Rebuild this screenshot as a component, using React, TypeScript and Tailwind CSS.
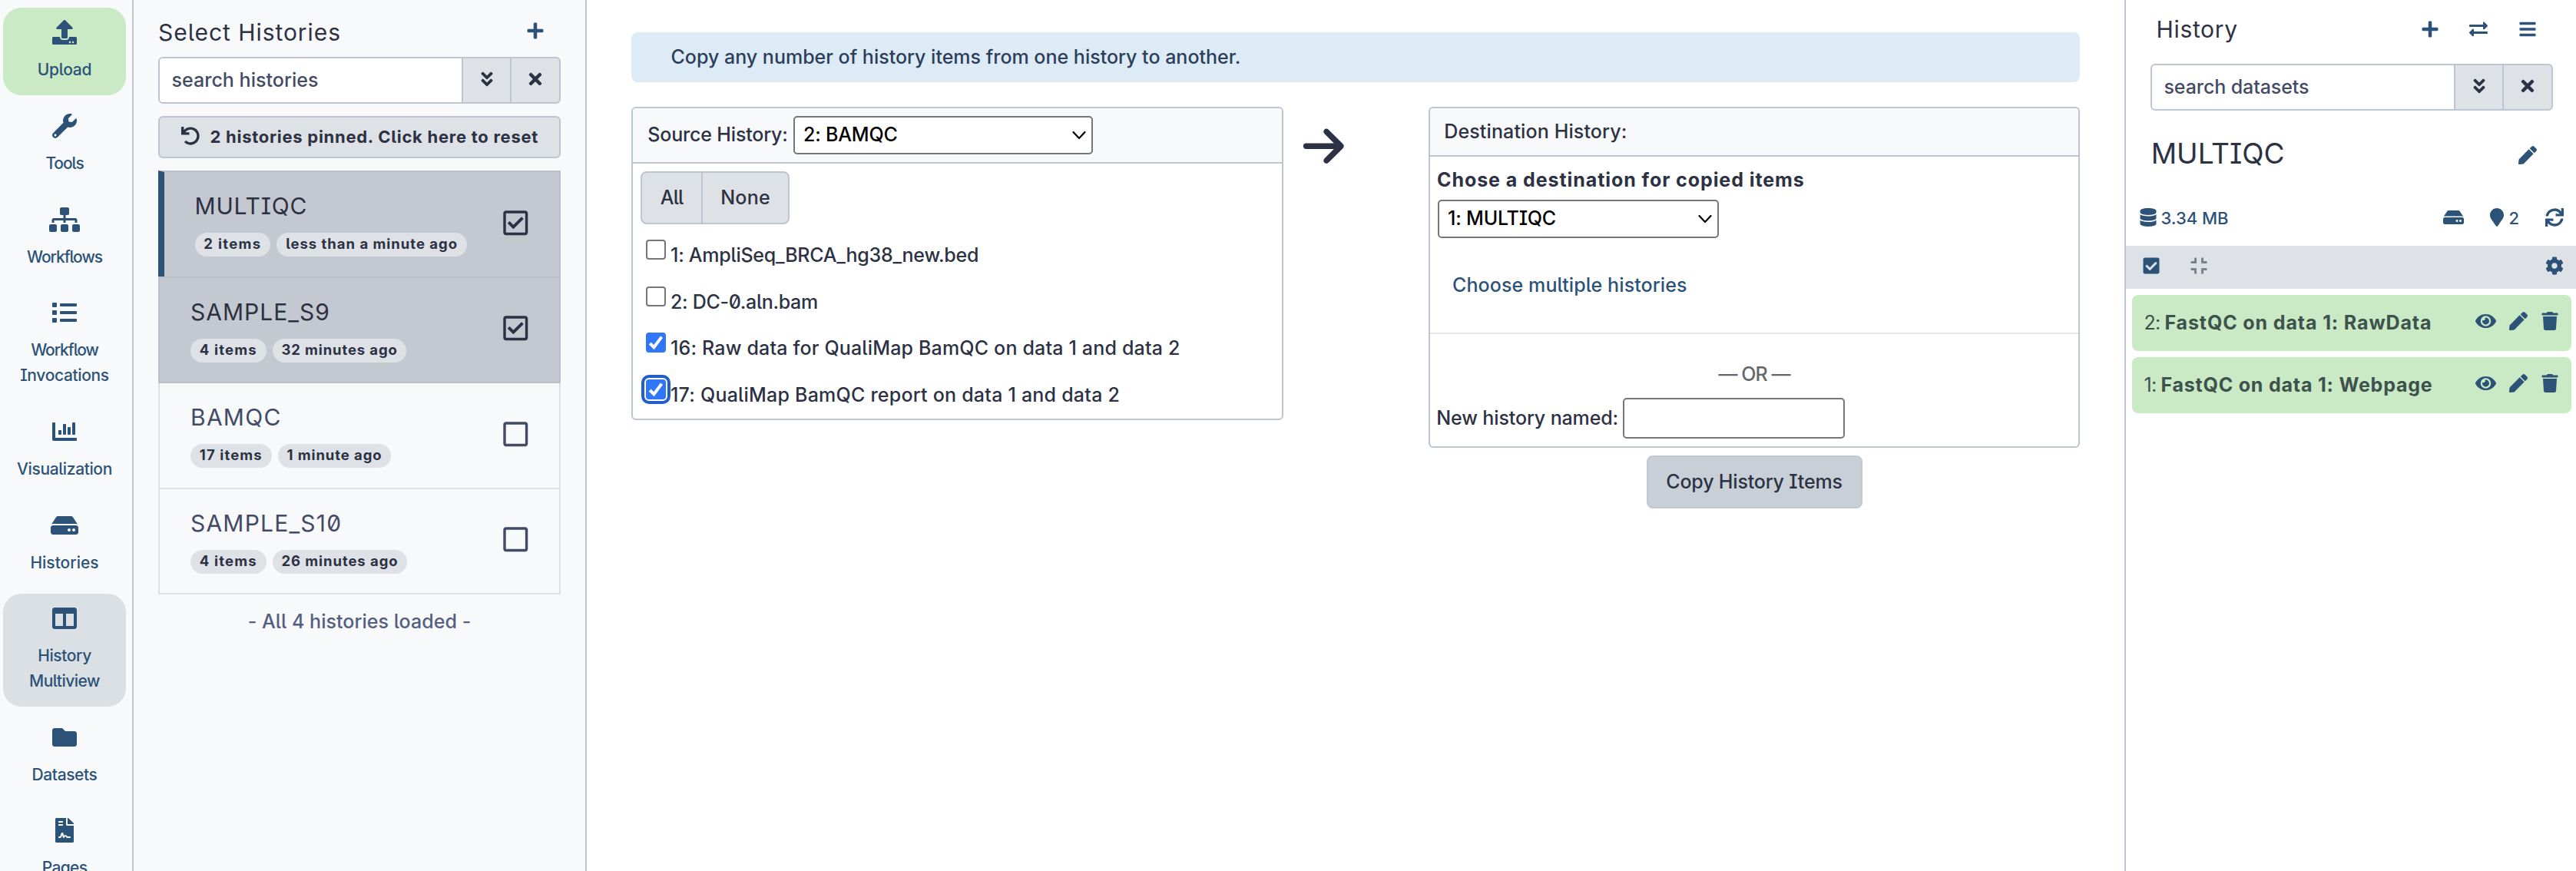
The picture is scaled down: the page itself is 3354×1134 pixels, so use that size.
import type { ReactNode } from "react";
import {
  FaUpload, FaWrench, FaSitemap, FaList, FaChartBar, FaHdd, FaColumns, FaFolder, FaFileContract, FaPlus,
  FaAngleDoubleDown, FaTimes, FaUndo, FaRegCheckSquare, FaRegSquare, FaExchangeAlt, FaBars, FaPen, FaDatabase,
  FaMapMarker, FaSync, FaCheckSquare, FaCompress, FaCog, FaEye, FaTrash,
} from "react-icons/fa";
import { FaArrowRight } from "react-icons/fa6";

function T({ t, c = "" }: { t: string; c?: string }) {
  return <span className={"whitespace-nowrap " + c}>{t}</span>;
}

const nav = [
  { Icon: FaUpload, size: "w-8 h-8", box: "bg-[#cae9c5]", lines: [["Upload", "tracking-[-0.01em]"]] },
  { Icon: FaWrench, size: "w-8 h-8", box: "", lines: [["Tools", "tracking-[-0.053em]"]] },
  { Icon: FaSitemap, size: "w-10 h-8", box: "", lines: [["Workflows", "tracking-[-0.051em]"]] },
  { Icon: FaList, size: "w-8 h-8", box: "", lines: [["Workflow", "tracking-[-0.051em]"], ["Invocations", "tracking-[-0.017em]"]] },
  { Icon: FaChartBar, size: "w-8 h-8", box: "", lines: [["Visualization", "tracking-[-0.018em]"]] },
  { Icon: FaHdd, size: "w-9 h-8", box: "", lines: [["Histories", ""]] },
  { Icon: FaColumns, size: "w-8 h-8", box: "bg-[#dbe0e4]", lines: [["History", "tracking-[-0.018em]"], ["Multiview", "tracking-[-0.024em]"]] },
  { Icon: FaFolder, size: "w-8 h-8", box: "", lines: [["Datasets", "tracking-[-0.02em]"]] },
  { Icon: FaFileContract, size: "w-8 h-8", box: "", lines: [["Pages", "tracking-[-0.032em]"]] },
];

function Sidebar() {
  return (
    <nav className="flex h-full w-[174px] shrink-0 flex-col gap-[7.8px] overflow-hidden border-r-2 border-[#bdc6d0] bg-[#f8f9fb] pt-[10px] pr-2 pl-1 text-[21px] leading-[32.6px] text-[#2c5277]">
      {nav.map(({ Icon, size, box, lines }, i) => (
        <div key={i} className={"flex shrink-0 flex-col items-center rounded-[24px] pt-4 pb-[16.4px] " + box}>
          <Icon className={"mb-[17px] shrink-0 " + size} />
          {lines.map(([t, c]) => <T key={t} t={t} c={c} />)}
        </div>
      ))}
    </nav>
  );
}

function Search({ children }: { children: ReactNode }) {
  return (
    <div className="flex h-[61px] w-[524px] rounded-md border-2 border-[#bdc6d0] bg-[#dee1e6] text-2xl text-[#2c3143]">
      <div className="flex flex-1 items-center rounded-l bg-white pl-[15.5px] text-[25px] text-[#434a66]">{children}</div>
      <div className="flex w-[63px] items-center justify-center border-l-2 border-[#bdc6d0] pb-[3px]"><FaAngleDoubleDown /></div>
      <div className="flex w-16 items-center justify-center border-l-2 border-[#bdc6d0] pb-[3px]"><FaTimes /></div>
    </div>
  );
}

function Row({ box, title, pills, on }: { box: string; title: ReactNode; pills: string[][]; on?: boolean }) {
  const Check = on ? FaRegCheckSquare : FaRegSquare;
  return (
    <div className={"flex items-center justify-between border-r-2 pr-[38px] " + box + (on ? " border-[#bac1cb] bg-[#c4c8d0] text-[#2c3143]" : " border-[#dee1e4] text-[#434a66]")}>
      <div className="flex h-full flex-col pt-6">
        <div className="flex h-10 items-center text-[30px] font-normal">{title}</div>
        <div className="mt-[15px] flex gap-2">
          {pills.map(([t, c]) => (
            <span key={t} className="flex h-[31px] items-center rounded-full bg-[#dee1e6] px-[11.8px] pb-[1.5px] text-[18.5px] font-bold text-[#2c3143]"><T t={t} c={c} /></span>
          ))}
        </div>
      </div>
      <Check className="mb-1 text-[36.57px]" />
    </div>
  );
}

function HistorySelector() {
  return (
    <section className="h-full w-[590px] shrink-0 border-r-2 border-[#bdc6d0] bg-[#f8f9fb] pl-8 text-[#2c3143]">
      <div className="w-[524px]">
        <div className="flex h-[74px] items-center justify-between pt-[11px] pr-[21.5px]">
          <T t="Select Histories" c="text-[30px] font-normal tracking-[0.032em]" />
          <FaPlus className="mb-[6px] text-2xl text-[#2c5277]" />
        </div>
        <Search><T t="search histories" c="tracking-[0.001em]" /></Search>
        <div className="mt-4 flex h-[55px] items-center gap-[13.5px] rounded-md border-2 border-[#bdc6d0] bg-[#dee1e6] pb-[1px] pl-7 text-[22px] font-bold">
          <FaUndo className="mb-[3px] text-2xl" />
          <T t="2 histories pinned. Click here to reset" c="tracking-[0.033em]" />
        </div>
        <div className="mt-4">
          <Row on box="h-[138px] border-t-2 border-l-8 pl-[39.5px] !border-l-[#2c5277]" title={<T t="MULTIQC" c="tracking-[0.028em]" />} pills={[["2 items", "tracking-[0.072em]"], ["less than a minute ago", "tracking-[0.053em]"]]} />
          <Row on box="h-[139px] border-y-2 border-l-2 pl-10" title={<T t="SAMPLE_S9" c="tracking-[0.034em]" />} pills={[["4 items", "tracking-[0.064em]"], ["32 minutes ago", "tracking-[0.047em]"]]} />
          <Row box="h-[138px] border-b-2 border-l-2 pl-10" title={<T t="BAMQC" c="tracking-[0.042em]" />} pills={[["17 items", "tracking-[0.061em]"], ["1 minute ago", "tracking-[0.05em]"]]} />
          <Row box="h-[137px] border-b-2 border-l-2 pl-10" title={<T t="SAMPLE_S10" c="tracking-[0.04em]" />} pills={[["4 items", "tracking-[0.064em]"], ["26 minutes ago", "tracking-[0.05em]"]]} />
        </div>
        <div className="mt-[17px] text-center text-[25px] leading-9 text-[#545e82]"><T t="- All 4 histories loaded -" c="tracking-[0.002em]" /></div>
      </div>
    </section>
  );
}

function Select({ w, children }: { w: string; children: ReactNode }) {
  return (
    <div className={"flex h-[50px] shrink-0 items-center justify-between rounded-[5px] border-2 border-[#767676] bg-white pr-[7px] pl-[11px] text-black " + w}>
      {children}
      <svg viewBox="0 0 18 12" className="h-3 w-[18px]" fill="none" stroke="currentColor" strokeWidth="2.2" strokeLinecap="round" strokeLinejoin="round"><path d="M1.5 2 9 10l7.5-8" /></svg>
    </div>
  );
}

function Check({ on, focus }: { on?: boolean; focus?: boolean }) {
  return (
    <span className={"mt-[9.6px] mr-[6px] flex size-[26px] shrink-0 items-center justify-center self-start rounded-[4px] " + (on ? "bg-[#2f76f8]" : "border-2 border-[#767676] bg-white") + (focus ? " outline-4 outline-offset-2 outline-[#245fc9]" : "")}>
      {on && <svg viewBox="0 0 26 26" className="size-[26px]" fill="none" stroke="white" strokeWidth="4"><path d="m5.2 14 5.2 5.2L20.5 5.6" /></svg>}
    </span>
  );
}

const items = [
  { t: "1: AmpliSeq_BRCA_hg38_new.bed", c: "tracking-[-0.01em]" },
  { t: "2: DC-0.aln.bam", c: "tracking-[-0.013em]" },
  { t: "16: Raw data for QualiMap BamQC on data 1 and data 2", c: "tracking-[0.007em]", on: true },
  { t: "17: QualiMap BamQC report on data 1 and data 2", c: "tracking-[0.009em]", on: true, focus: true },
];

function CopyView() {
  return (
    <main className="h-full flex-1 bg-white px-[58px] pt-[42px] text-[25px] text-[#2c3143]">
      <div className="flex h-[65px] items-center rounded-lg bg-[#ddebf6] pl-[51.5px] text-[#2c3e5a]">
        <T t="Copy any number of history items from one history to another." />
      </div>
      <div className="mt-8 flex items-start">
        <div className="h-[408px] w-[849px] shrink-0 overflow-hidden rounded-md border-2 border-[#bdc6d0]">
          <div className="flex h-[72px] items-center border-b-2 border-[#bdc6d0] bg-[#f8f9fb] pl-[19.3px]">
            <div className="flex w-[189.7px] shrink-0"><T t="Source History:" c="tracking-[-0.007em]" /></div>
            <Select w="w-[390px]"><T t="2: BAMQC" c="tracking-[-0.008em]" /></Select>
          </div>
          <div className="mt-[10px] ml-[10px] flex h-[69px] w-[194px] items-center rounded-lg border-2 border-[#bdc6d0] bg-[#dee1e6]">
            <div className="flex h-full w-[79px] items-center justify-center border-r-2 border-[#bdc6d0] pt-[1px]"><T t="All" c="tracking-[-0.035em]" /></div>
            <div className="flex h-full flex-1 items-center justify-center pt-[1px]"><T t="None" c="tracking-[0.009em]" /></div>
          </div>
          <div className="mt-[10.4px] pl-[17px]">
            {items.map(({ t, c, on, focus }) => (
              <div key={t} className="flex h-[60.6px] items-center"><Check on={on} focus={focus} /><T t={t} c={c} /></div>
            ))}
          </div>
        </div>
        <div className="flex w-[189px] shrink-0 pt-[21px] pl-[22px]"><FaArrowRight className="text-[60.5px]" /></div>
        <div className="w-[848px] shrink-0">
          <div className="overflow-hidden rounded-md border-2 border-[#bdc6d0] pb-[10px]">
            <div className="flex h-[63px] items-center border-b-2 border-[#bdc6d0] bg-[#f8f9fb] pl-[18.3px]"><T t="Destination History:" c="tracking-[0.005em]" /></div>
            <div className="mt-[11.6px] ml-[9px] leading-9 font-bold"><T t="Chose a destination for copied items" c="tracking-[0.037em]" /></div>
            <div className="mt-[8.4px] ml-[10px] flex"><Select w="w-[366px]"><T t="1: MULTIQC" c="tracking-[-0.008em]" /></Select></div>
            <div className="mt-[43px] ml-[29px] leading-9 text-[#2c5277]"><T t="Choose multiple histories" c="tracking-[0.004em]" /></div>
            <div className="mt-11 h-[2px] bg-[#e6e6e6]" />
            <div className="mt-[34px] text-center leading-9 text-[#666]"><T t="— OR —" c="tracking-[-0.038em]" /></div>
            <div className="mt-[13px] ml-[8.3px] flex h-[53px] items-center">
              <div className="flex w-[242.7px] shrink-0"><T t="New history named:" c="tracking-[-0.005em]" /></div>
              <div className="h-full w-[289px] rounded-[5px] border-2 border-[#767676] bg-white" />
            </div>
          </div>
          <div className="mx-auto mt-[10px] flex h-[69px] w-[281px] items-center justify-center rounded-lg border-2 border-[#c1c8d1] bg-[#c9cfd7] pt-[1px]"><T t="Copy History Items" c="tracking-[-0.007em]" /></div>
        </div>
      </div>
    </main>
  );
}

const datasets = [
  { n: "2:", t: "FastQC on data 1: RawData", c: "tracking-[0.035em]" },
  { n: "1:", t: "FastQC on data 1: Webpage", c: "tracking-[0.032em]" },
];

function HistoryPanel() {
  return (
    <aside className="h-full w-[588px] shrink-0 border-l-2 border-[#bdc3d3] bg-white text-2xl text-[#2c5277]">
      <div className="flex h-[83px] items-center justify-between pr-[31.7px] pb-[8px] pl-[39.5px]">
        <T t="History" c="mt-[3px] text-[30px] font-normal text-[#2c3143] tracking-[0.022em]" />
        <div className="flex">
          <div className="flex w-[63.5px] justify-center"><FaPlus /></div>
          <div className="flex w-[63.5px] justify-center"><FaExchangeAlt /></div>
          <div className="flex w-[63.5px] justify-center"><FaBars /></div>
        </div>
      </div>
      <div className="ml-8"><Search><T t="search datasets" c="tracking-[-0.004em]" /></Search></div>
      <div className="flex h-[111px] items-center justify-between pr-[51px] pl-[32.7px]">
        <T t="MULTIQC" c="text-[37px] font-normal text-[#2c3143]" />
        <FaPen className="mt-[5px]" />
      </div>
      <div className="flex h-[65px] items-center pr-4 pb-[9px] pl-[16.5px]">
        <FaDatabase />
        <T t="3.34 MB" c="mt-[3px] ml-[5px] text-[22px]" />
        <FaHdd className="ml-auto w-[27px]" />
        <FaMapMarker className="ml-[31px]" />
        <T t="2" c="mt-[3px] ml-[3px] text-[22px]" />
        <FaSync className="ml-[34px]" />
      </div>
      <div className="flex h-14 items-center bg-[#dee1e6] pr-4 pb-1 pl-[20.5px]">
        <FaCheckSquare />
        <FaCompress className="ml-[38.5px] text-[#7d8194]" />
        <FaCog className="ml-auto" />
      </div>
      <div className="flex flex-col gap-2 pt-2 pr-[6px] pl-2">
        {datasets.map((d) => (
          <div key={d.n} className="flex h-[73px] items-center rounded-lg bg-[#cae9c5] pr-[16.5px] pl-[15.5px]">
            <span className="flex gap-[6px] text-[25px] text-[#3d524c]"><T t={d.n} c="font-normal tracking-[-0.03em]" /><T t={d.t} c={"font-bold " + d.c} /></span>
            <FaEye className="mb-[5px] ml-auto w-[27px]" />
            <FaPen className="mb-[5px] ml-[17px]" />
            <FaTrash className="mb-[5px] ml-[16.5px]" />
          </div>
        ))}
      </div>
    </aside>
  );
}

export default function App() {
  return (
    <div className="flex h-[1134px] w-[3354px] overflow-hidden font-[450] font-['Inter',sans-serif] [font-feature-settings:'zero','cv08','cv05']">
      <Sidebar />
      <HistorySelector />
      <CopyView />
      <HistoryPanel />
    </div>
  );
}
